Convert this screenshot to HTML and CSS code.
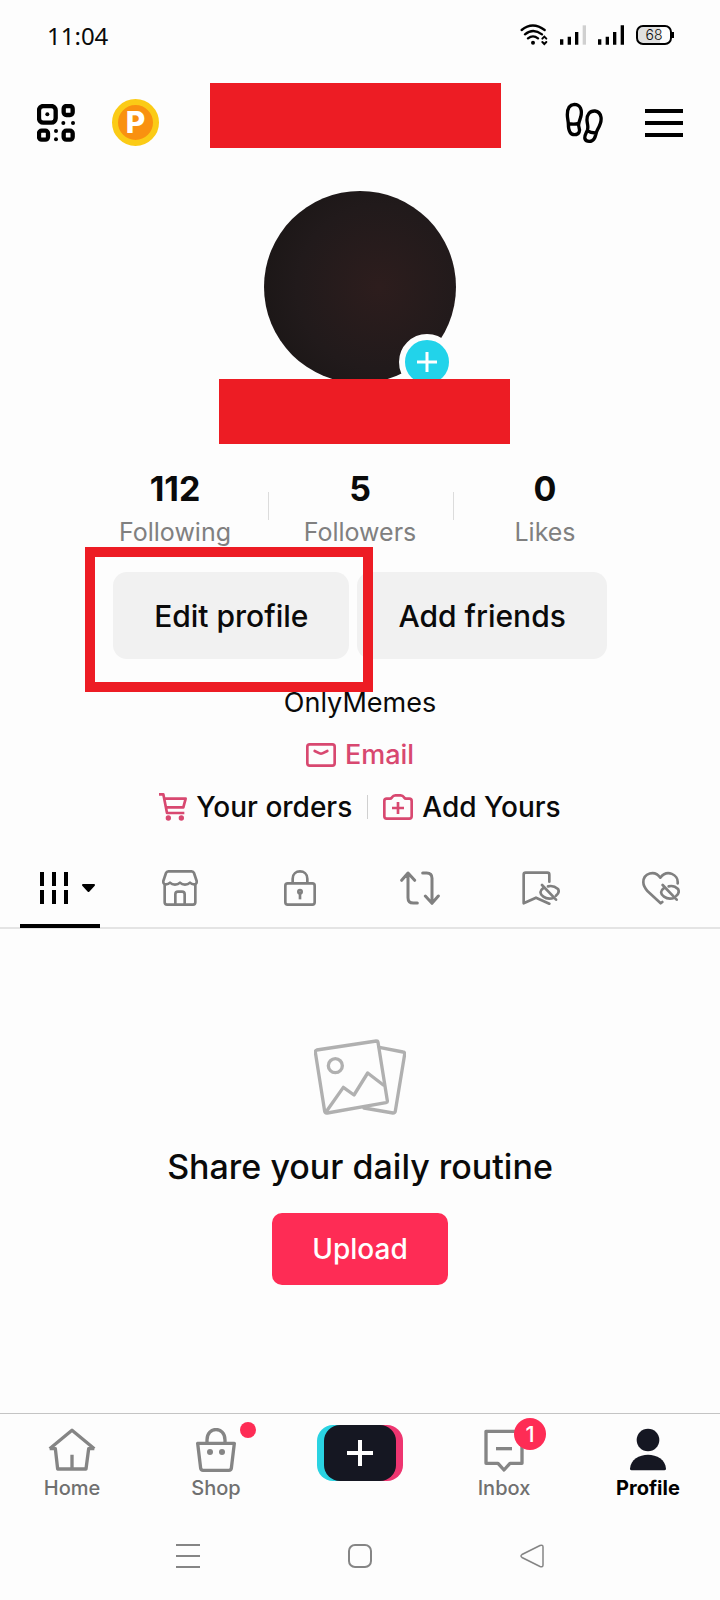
FILE: index.html
```html
<!DOCTYPE html>
<html lang="en">
<head>
  <meta charset="UTF-8" />
  <meta name="viewport" content="width=device-width, initial-scale=1.0" />
  <title>Profile</title>
  <link rel="stylesheet" href="styles.css">
</head>
<body>
  <div class="screen">
    <div class="status-bar">
      <span class="time">11:04</span>
      <div class="status-icons">
        <svg width="28" height="22" viewBox="0 0 84 66" fill="none" stroke="#000" stroke-width="7" stroke-linecap="round">
          <path d="M5 18Q38 -9 74 18M15 31Q39 11 66 31M24 43Q39 31 54 43" />
          <circle cx="39" cy="56" r="6" fill="#000" stroke="none" />
          <path d="M67 44l6-6 6 6M67 54l6 6 6-6" stroke-width="6" />
        </svg>
        <svg width="26" height="22" viewBox="0 0 78 66" stroke-width="10">
          <path d="M5 62V46M28 62V38M50 62V24" stroke="#000" />
          <path d="M73 62V4" stroke="#d0d0d0" />
        </svg>
        <svg width="26" height="22" viewBox="0 0 78 66" stroke="#000" stroke-width="10">
          <path d="M5 62V46M28 62V38M50 62V24M73 62V4" />
        </svg>
        <span class="battery">68</span>
      </div>
    </div>

    <header class="top-bar">
      <button class="icon-button" aria-label="QR code">
        <svg width="38" height="38" viewBox="0 0 114 114" fill="none" stroke="#000" stroke-width="13">
          <rect x="6" y="6" width="50" height="50" rx="13" />
          <rect x="80" y="6" width="27" height="27" rx="8" />
          <rect x="6" y="80" width="27" height="27" rx="8" />
          <rect x="80" y="80" width="27" height="27" rx="8" />
          <g fill="#000" stroke="none">
            <circle cx="31" cy="31" r="6" />
            <circle cx="79" cy="57" r="6" />
            <circle cx="108" cy="57" r="6" />
            <circle cx="57" cy="81" r="6" />
            <circle cx="57" cy="106" r="6" />
          </g>
        </svg>
      </button>
      <button class="icon-button coin" aria-label="Points">P</button>
      <div class="block top-block"></div>
      <button class="icon-button steps" aria-label="Profile views">
        <svg width="38" height="42" viewBox="0 0 114 126" fill="none" stroke="#000" stroke-width="10" stroke-linejoin="round">
          <path d="M28 7C12 8 7 22 7 38C7 50 10 57 10 65C10 80 13 98 29 98C43 98 46 86 42 76C38 68 43 58 47 46C53 24 46 7 28 7ZM9 64Q26 69 41 64" />
          <path d="M90 27C74 26 65 38 66 56C67 69 71 73 67 85C62 96 57 103 60 111C64 120 80 121 87 111C93 103 92 92 98 82C106 68 110 58 108 46C106 34 101 28 90 27ZM66 86Q77 93 92 93" />
        </svg>
      </button>
      <button class="icon-button menu" aria-label="Menu">
        <svg width="38" height="28" viewBox="0 0 38 28" stroke="#000" stroke-width="4">
          <path d="M0 2H38M0 14H38M0 26H38" />
        </svg>
      </button>
    </header>

    <main>
      <section class="profile">
        <div class="avatar">
          <button class="avatar-add" aria-label="Add story">
            <svg width="20" height="20" viewBox="0 0 20 20" stroke="#fff" stroke-width="3"><path d="M0 10H20M10 0V20" /></svg>
          </button>
        </div>
        <div class="block name-block"></div>

        <div class="stats">
          <a class="stat" href="#"><strong>112</strong><span>Following</span></a>
          <a class="stat" href="#"><strong>5</strong><span>Followers</span></a>
          <a class="stat" href="#"><strong>0</strong><span>Likes</span></a>
        </div>

        <div class="actions">
          <div class="highlighted">
            <button class="action-button">Edit profile</button>
          </div>
          <button class="action-button">Add friends</button>
        </div>

        <p class="bio">OnlyMemes</p>
        <a class="row-link email" href="#">
          <svg width="30" height="24" viewBox="0 0 90 72" fill="none" stroke="#d84870" stroke-width="8" stroke-linecap="round" stroke-linejoin="round">
            <rect x="4" y="4" width="82" height="64" rx="7" />
            <path d="M26 24L41 31Q45 33 49 31L64 24" />
          </svg>
          Email
        </a>
        <div class="links">
          <a class="row-link" href="#">
            <svg width="28" height="28" viewBox="0 0 84 84" fill="none" stroke="#d84870" stroke-width="8" stroke-linejoin="round">
              <path d="M0 4H13L24 60H76M16 17H80L73 43H22" />
              <circle cx="28" cy="75" r="8" fill="#d84870" stroke="none" />
              <circle cx="67" cy="75" r="8" fill="#d84870" stroke="none" />
            </svg>
            Your orders
          </a>
          <a class="row-link" href="#">
            <svg width="30" height="26" viewBox="0 0 90 78" fill="none" stroke="#d84870" stroke-width="8" stroke-linejoin="round">
              <path d="M11 14H21Q24 14 27 10Q31 4 37 4H53Q59 4 63 10Q66 14 69 14H79Q86 14 86 21V67Q86 74 79 74H11Q4 74 4 67V21Q4 14 11 14Z" />
              <path d="M45 24V60M27 42H63" />
            </svg>
            Add Yours
          </a>
        </div>
      </section>

      <nav class="tabs">
        <button class="tab active" aria-label="Videos">
          <svg width="56" height="32" viewBox="0 0 56 32">
            <path d="M2 0V14M14 0V14M26 0V14M2 18V32M14 18V32M26 18V32" stroke="#000" stroke-width="4" />
            <path d="M43 13H54L48.500 19Z" fill="#000" stroke="#000" stroke-width="2" stroke-linejoin="round" />
          </svg>
        </button>
        <button class="tab" aria-label="Shop">
          <svg width="36" height="36" viewBox="0 0 108 108" fill="none" stroke="#808080" stroke-width="8" stroke-linejoin="round">
            <path d="M19 4H89Q94 4 96 9L104 33Q105 43 96 43Q89 43 84 38Q78 44 69 44Q60 44 54 38Q48 44 39 44Q30 44 24 38Q19 43 12 43Q3 43 4 33L12 9Q14 4 19 4Z" />
            <path d="M8 42V97Q8 104 15 104H93Q100 104 100 97V42M40 104V73Q40 65 48 65H60Q68 65 68 73V104" />
          </svg>
        </button>
        <button class="tab" aria-label="Private">
          <svg width="32" height="36" viewBox="0 0 96 108" fill="none" stroke="#808080" stroke-width="8">
            <rect x="4" y="40" width="88" height="64" rx="7" />
            <path d="M26 39V26C26 -3 70 -3 70 26V39" />
            <circle cx="48" cy="65" r="5" />
            <path d="M48 68V88" />
          </svg>
        </button>
        <button class="tab" aria-label="Reposts">
          <svg width="40" height="34" viewBox="0 0 120 102" fill="none" stroke="#808080" stroke-width="9" stroke-linecap="round" stroke-linejoin="round">
            <path d="M5 28L24 6L44 28M24 8V80Q24 96 40 96H52M68 6H80Q96 6 96 22V95M76 75L96 97L115 75" />
          </svg>
        </button>
        <button class="tab hidden-tab" aria-label="Favorites">
          <svg width="38" height="34" viewBox="0 0 114 102" fill="none" stroke="#808080" stroke-width="8" stroke-linecap="round" stroke-linejoin="round">
            <path d="M82 32V11Q82 5 76 5H11Q5 5 5 11V97L42 80L82 98" />
            <path d="M66 49Q46 64 64 77Q78 87 96 80M78 46Q94 42 108 54Q114 65 102 74M60 42L102 86" />
          </svg>
        </button>
        <button class="tab hidden-tab" aria-label="Liked">
          <svg width="38" height="34" viewBox="0 0 114 102" fill="none" stroke="#808080" stroke-width="8" stroke-linecap="round" stroke-linejoin="round">
            <path d="M107 37C110 10 75 -6 55 20C38 -4 4 6 4 34C4 45 9 52 17 61L56 97L61 93" />
            <path d="M68 49Q48 64 66 77Q80 87 98 80M80 46Q96 42 108 54Q114 65 103 74M62 42L104 86" />
          </svg>
        </button>
      </nav>

      <section class="empty">
        <svg width="92" height="77" viewBox="0 0 276 231" fill="none" stroke="#b0b0b0" stroke-width="10" stroke-linejoin="round" stroke-linecap="round">
          <path d="M8 33L187 6Q191 5 192 10L220 185Q221 190 216 191L40 222Q33 223 32 217L4 40Q4 34 8 33Z" />
          <path d="M196 25L267 39Q273 40 272 46L244 216Q243 222 237 222L150 207" />
          <circle cx="64" cy="80" r="21" />
          <path d="M36 219L88 145L120 168L161 102L208 138" />
        </svg>
        <h2>Share your daily routine</h2>
        <button class="upload">Upload</button>
      </section>
    </main>

    <nav class="bottom-nav">
      <a class="nav-item" href="#">
        <svg width="48" height="44" viewBox="0 0 144 132" fill="none" stroke="#858585" stroke-width="10" stroke-linejoin="round">
          <path d="M5 62L72 7L139 62M5 62H22L29 123H114L122 62H139M72 80V122" />
        </svg>
        Home
      </a>
      <a class="nav-item" href="#">
        <svg width="48" height="44" viewBox="0 0 144 132" fill="none" stroke="#858585" stroke-width="10" stroke-linejoin="round">
          <path d="M17 46H127L118 121Q117 127 111 127H33Q27 127 26 121ZM45 44V36C45 -6 99 -6 99 36V44" />
          <circle cx="54" cy="72" r="9" fill="#858585" stroke="none" />
          <circle cx="90" cy="72" r="9" fill="#858585" stroke="none" />
        </svg>
        Shop
        <span class="dot"></span>
      </a>
      <button class="create" aria-label="Create">
        <svg width="26" height="26" viewBox="0 0 26 26" stroke="#fff" stroke-width="4"><path d="M0 13H26M13 0V26" /></svg>
      </button>
      <a class="nav-item" href="#">
        <svg width="48" height="44" viewBox="0 0 144 132" fill="none" stroke="#858585" stroke-width="10" stroke-linejoin="round">
          <path d="M18 10H126V106H90L72 126L54 106H18Z" />
          <path d="M48 62H96" />
        </svg>
        Inbox
        <span class="badge">1</span>
      </a>
      <a class="nav-item current" href="#">
        <svg width="48" height="44" viewBox="0 0 144 132" fill="#151722">
          <circle cx="72" cy="36" r="34" />
          <path d="M18 122C21 66 123 66 126 122Q126 127 121 127H23Q18 127 18 122Z" />
        </svg>
        Profile
      </a>
    </nav>

    <div class="system-nav">
      <button class="icon-button" aria-label="Recent apps">
        <svg width="24" height="24" viewBox="0 0 24 24" stroke="#858585" stroke-width="2"><path d="M0 1H24M0 12H24M0 23H24" /></svg>
      </button>
      <button class="icon-button" aria-label="Home screen">
        <svg width="24" height="24" viewBox="0 0 24 24" fill="none" stroke="#858585" stroke-width="2"><rect x="1" y="1" width="22" height="22" rx="6" /></svg>
      </button>
      <button class="icon-button" aria-label="Back">
        <svg width="24" height="24" viewBox="0 0 24 24" fill="none" stroke="#858585" stroke-width="1.500"><path d="M20 1.500L2 10.500Q0 12 2 13.500L20 22.500Q23 23.500 23 21V3Q23 .5 20 1.500Z" /></svg>
      </button>
    </div>
  </div>
</body>
</html>
```
FILE: styles.css
```css
:root {
  --red: #ed1c24;
  --pink: #fe2c55;
  --link-pink: #d84870;
  --gray: #808080;
  --ink: #0a0a0a;
}
* {
  box-sizing: border-box;
}
body {
  margin: 0;
  background: #fdfdfd;
  color: var(--ink);
  font-family: Inter, "Noto Sans", sans-serif;
}
h2, p {
  margin: 0;
}
a {
  color: inherit;
  text-decoration: none;
}
button {
  font-family: inherit;
  color: inherit;
  border: none;
  background: none;
  padding: 0;
  cursor: pointer;
}
svg {
  display: block;
  flex-shrink: 0;
}
.screen {
  min-height: 100vh;
  display: flex;
  flex-direction: column;
}
main {
  flex: 1;
}
.block {
  background: var(--red);
  width: 291px;
  height: 65px;
}

/* status bar */
.status-bar {
  display: flex;
  justify-content: space-between;
  align-items: center;
  height: 70px;
  padding: 0 48px 0 47px;
}
.time {
  font-family: "Noto Sans", sans-serif;
  font-size: 24px;
}
.status-icons {
  display: flex;
  align-items: center;
  gap: 12px;
}
.battery {
  position: relative;
  width: 36px;
  height: 20px;
  border: 2px solid #000;
  border-radius: 7px;
  background: linear-gradient(90deg, #e0e0e0 68%, transparent 68%);
  font-size: 14px;
  font-weight: 300;
  line-height: 16px;
  text-align: center;
}
.battery::after {
  content: "";
  position: absolute;
  right: -4px;
  top: 5px;
  width: 2px;
  height: 6px;
  background: #000;
}

/* top bar */
.top-bar {
  display: flex;
  align-items: center;
  margin-top: 13px;
  padding: 0 37px;
}
.top-bar .icon-button {
  margin-top: 14px;
}
.top-bar .coin {
  width: 47px;
  height: 47px;
  margin-left: 37px;
  border: 6px solid #fbcb16;
  border-radius: 50%;
  background: #f99110;
  color: #fff;
  font-size: 30px;
  font-weight: 800;
  line-height: 35px;
}
.top-block {
  margin-left: 51px;
}
.top-bar .steps {
  margin-left: auto;
}
.top-bar .menu {
  margin-left: 42px;
}

/* profile */
.profile {
  display: flex;
  flex-direction: column;
  align-items: center;
  padding-top: 43px;
}
.avatar {
  position: relative;
  width: 192px;
  height: 192px;
  border-radius: 50%;
  background: radial-gradient(circle at 60% 50%, #2d1d1d, #211a1b 55%, #171413);
}
.avatar-add {
  position: absolute;
  right: 1px;
  bottom: -7px;
  width: 56px;
  height: 56px;
  border: 6px solid #fdfdfd;
  border-radius: 50%;
  background: #22d3ea;
  display: flex;
  align-items: center;
  justify-content: center;
}
.name-block {
  position: relative;
  margin: -4px 0 0 9px;
}
.stats {
  display: grid;
  grid-template-columns: repeat(3, 185px);
  margin-top: 25px;
}
.stat {
  position: relative;
  text-align: center;
}
.stat + .stat::before {
  content: "";
  position: absolute;
  left: 0;
  top: 23px;
  width: 1px;
  height: 28px;
  background: #dcdcdc;
}
.stat strong {
  display: block;
  font-size: 34px;
  line-height: 40px;
}
.stat span {
  display: block;
  margin-top: 7px;
  color: var(--gray);
  font-size: 25px;
  line-height: 32px;
}
.actions {
  display: flex;
  gap: 8px;
  margin-top: 24px;
}
.action-button {
  height: 87px;
  padding: 0 41px;
  border-radius: 14px;
  background: #f1f1f1;
  font-size: 30px;
  font-weight: 500;
}
.highlighted {
  position: relative;
}
.highlighted::after {
  content: "";
  position: absolute;
  z-index: 1;
  inset: -25px -24px -33px -28px;
  border: 10px solid var(--red);
  pointer-events: none;
}
.bio {
  margin-top: 28px;
  font-size: 27px;
  line-height: 32px;
}
.row-link {
  display: flex;
  align-items: center;
  gap: 9px;
  font-size: 28px;
  line-height: 32px;
  font-weight: 500;
}
.email {
  margin-top: 20px;
  color: var(--link-pink);
  font-size: 27px;
}
.links {
  display: flex;
  margin-top: 20px;
}
.links .row-link + .row-link {
  position: relative;
  margin-left: 15px;
  padding-left: 16px;
}
.links .row-link + .row-link::before {
  content: "";
  position: absolute;
  left: 0;
  top: 4px;
  width: 1px;
  height: 24px;
  background: #d0d0d0;
}

/* tabs */
.tabs {
  display: grid;
  grid-template-columns: repeat(6, 1fr);
  margin-top: 25px;
  border-bottom: 2px solid #e4e4e4;
}
.tab {
  position: relative;
  height: 79px;
  display: flex;
  align-items: center;
  justify-content: center;
}
.tab.active {
  padding-left: 16px;
}
.hidden-tab {
  padding-left: 2px;
}
.tab.active::after {
  content: "";
  position: absolute;
  left: 20px;
  right: 20px;
  bottom: -1px;
  height: 4px;
  background: #000;
}

/* empty state */
.empty {
  display: flex;
  flex-direction: column;
  align-items: center;
  padding: 110px 20px 40px;
}
.empty h2 {
  margin-top: 31px;
  font-size: 34px;
  line-height: 40px;
  font-weight: 500;
}
.upload {
  min-width: 176px;
  height: 72px;
  margin-top: 26px;
  border-radius: 10px;
  background: var(--pink);
  color: #fff;
  font-size: 28px;
  font-weight: 500;
}

/* bottom navigation */
.bottom-nav {
  display: grid;
  grid-template-columns: repeat(5, 1fr);
  height: 99px;
  padding-top: 11px;
  border-top: 1px solid #c4c4c4;
}
.nav-item {
  position: relative;
  display: flex;
  flex-direction: column;
  align-items: center;
  padding-top: 3px;
  color: #707070;
  font-size: 20px;
  line-height: 32px;
  font-weight: 500;
}
.nav-item.current {
  color: #000;
  font-weight: 700;
}
.dot {
  position: absolute;
  left: calc(50% + 24px);
  top: -3px;
  width: 16px;
  height: 16px;
  border-radius: 50%;
  background: var(--pink);
}
.badge {
  position: absolute;
  left: calc(50% + 10px);
  top: -7px;
  width: 32px;
  height: 32px;
  border-radius: 50%;
  background: var(--pink);
  color: #fff;
  font-size: 22px;
  line-height: 32px;
  text-align: center;
}
.create {
  justify-self: center;
  display: flex;
  align-items: center;
  justify-content: center;
  width: 72px;
  height: 56px;
  border-radius: 16px;
  background: #151722;
  box-shadow: -7px 0 0 #2ad3e2, 7px 0 0 #ee3570;
}

/* system navigation */
.system-nav {
  display: flex;
  justify-content: center;
  align-items: center;
  gap: 148px;
  height: 88px;
}
```
